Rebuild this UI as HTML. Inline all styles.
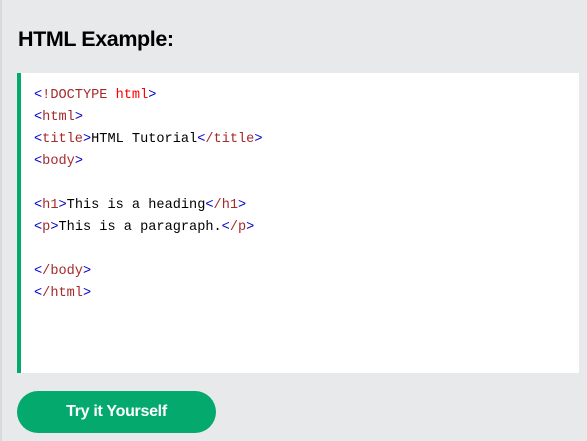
<!DOCTYPE html>
<html><head><style>
body{margin:0;width:587px;height:441px;background:#e7e9eb;font-family:"Liberation Sans",sans-serif;overflow:hidden;position:relative}
.lb{position:absolute;left:0;top:0;width:2px;height:441px;background:#d8dadc}
h2{position:absolute;left:18px;top:27px;margin:0;font-size:21.5px;font-weight:bold;color:#000;letter-spacing:-0.4px}
.code{position:absolute;left:17px;top:73px;width:558px;height:300px;background:#fff;border-left:4px solid #04aa6d;font-family:"Liberation Mono",monospace;font-size:13.6px;color:#000}
.l{position:absolute;left:13px;white-space:pre}
.t{color:#a52a2a}.b{color:#0000cd}.r{color:#ff0000}
.btn{position:absolute;left:17px;top:391px;width:199px;height:42px;border-radius:21px;background:#04aa6d;color:#fff;font-size:16px;font-weight:bold;text-align:center;line-height:42px;letter-spacing:-0.3px}
</style></head><body>
<div class="lb"></div>
<h2>HTML Example:</h2>
<div class="code">
<div class="l" style="top:15px"><span class="b">&lt;</span><span class="t">!DOCTYPE</span> <span class="r">html</span><span class="b">&gt;</span></div>
<div class="l" style="top:37px"><span class="b">&lt;</span><span class="t">html</span><span class="b">&gt;</span></div>
<div class="l" style="top:59px"><span class="b">&lt;</span><span class="t">title</span><span class="b">&gt;</span>HTML Tutorial<span class="b">&lt;</span><span class="t">/title</span><span class="b">&gt;</span></div>
<div class="l" style="top:81px"><span class="b">&lt;</span><span class="t">body</span><span class="b">&gt;</span></div>
<div class="l" style="top:125px"><span class="b">&lt;</span><span class="t">h1</span><span class="b">&gt;</span>This is a heading<span class="b">&lt;</span><span class="t">/h1</span><span class="b">&gt;</span></div>
<div class="l" style="top:147px"><span class="b">&lt;</span><span class="t">p</span><span class="b">&gt;</span>This is a paragraph.<span class="b">&lt;</span><span class="t">/p</span><span class="b">&gt;</span></div>
<div class="l" style="top:191px"><span class="b">&lt;</span><span class="t">/body</span><span class="b">&gt;</span></div>
<div class="l" style="top:213px"><span class="b">&lt;</span><span class="t">/html</span><span class="b">&gt;</span></div>
</div>
<div class="btn">Try it Yourself</div>
</body></html>
